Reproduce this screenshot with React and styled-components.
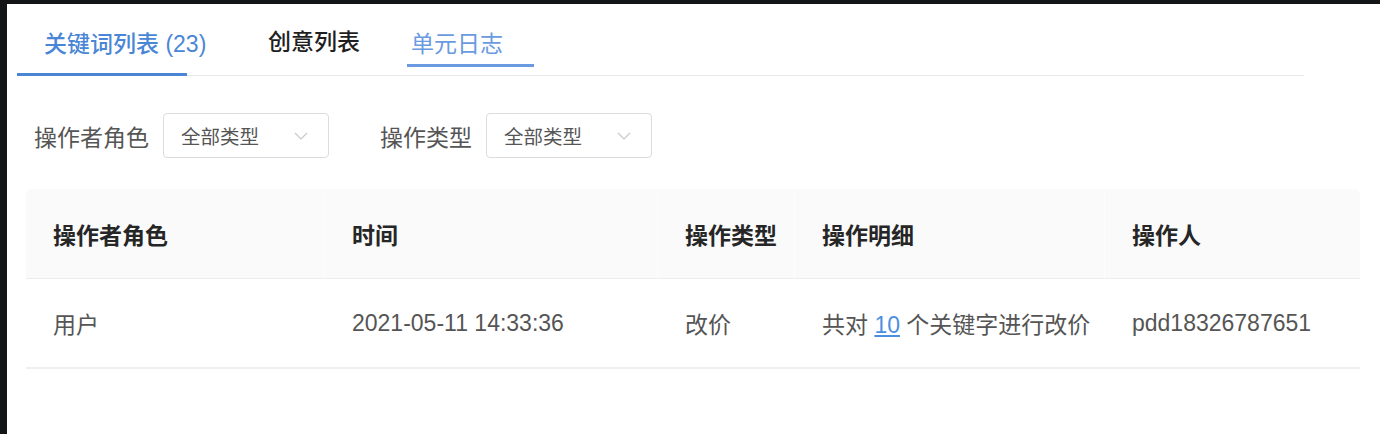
import React from 'react'
import styled, { createGlobalStyle } from 'styled-components'

const GlobalStyle = createGlobalStyle`
  html, body {
    margin: 0;
    padding: 0;
    background: #131416;
  }
  body {
    font-family: "Liberation Sans", "Noto Sans CJK SC", sans-serif;
  }
`

const columns = [
    { key: 'role', title: '操作者角色', width: 299 },
    { key: 'time', title: '时间', width: 333 },
    { key: 'type', title: '操作类型', width: 137 },
    { key: 'detail', title: '操作明细', width: 310 },
    { key: 'user', title: '操作人', width: 255 },
]

const rows = [
    { role: '用户', time: '2021-05-11 14:33:36', type: '改价', count: 10, user: 'pdd18326787651' },
]

function Chevron() {
    return (
        <svg width="14" height="8" viewBox="0 0 14 8" fill="none">
            <polyline points="1,1 7,7 13,1" stroke="#c9c9c9" strokeWidth="1.2" />
        </svg>
    )
}

function Filter({ label, value }) {
    return (
        <FilterItem>
            <Label>{label}</Label>
            <Select>
                <span>{value}</span>
                <Chevron />
            </Select>
        </FilterItem>
    )
}

function App() {
    return (
        <Frame>
            <GlobalStyle />
            <TabBar>
                <Tab $w={224} $active $strong>关键词列表 (23)</Tab>
                <Tab $w={139} $strong>创意列表</Tab>
                <Tab $underline>单元日志</Tab>
                <InkBar />
            </TabBar>

            <FilterRow>
                <Filter label="操作者角色" value="全部类型" />
                <Filter label="操作类型" value="全部类型" />
            </FilterRow>

            <Table>
                <colgroup>
                    {columns.map(c => <col key={c.key} style={{ width: c.width }} />)}
                </colgroup>
                <thead>
                    <tr>
                        {columns.map(c => <Th key={c.key}>{c.title}</Th>)}
                    </tr>
                </thead>
                <tbody>
                    {rows.map((r, i) => (
                        <tr key={i}>
                            <Td>{r.role}</Td>
                            <Td>{r.time}</Td>
                            <Td>{r.type}</Td>
                            <Td>共对 <Link>{r.count}</Link> 个关键字进行改价</Td>
                            <Td>{r.user}</Td>
                        </tr>
                    ))}
                </tbody>
            </Table>
        </Frame>
    )
}

export default App

const Frame = styled.div`
margin: 4px 0 0 7px;
min-height: calc(100vh - 4px);
background: #fff;
overflow: hidden;
`

const TabBar = styled.div`
position: relative;
display: flex;
align-items: flex-start;
margin: 0 76px 0 10px;
height: 71px;
padding-left: 27px;
border-bottom: 1px solid #e8e8e8;
`

const Tab = styled.div`
box-sizing: border-box;
flex: none;
width: ${p => (p.$w ? `${p.$w}px` : 'auto')};
padding-top: ${p => (p.$strong && !p.$active ? '22px' : '24px')};
font-size: 23px;
line-height: 32px;
font-weight: ${p => (p.$strong ? 500 : 400)};
color: ${p => (p.$active ? '#4a86d6' : p.$underline ? '#6a9be0' : '#1f1f1f')};
${p => p.$underline && `
  padding: 24px 31px 4px 4px;
  border-bottom: 3px solid #6a9be0;
`}
`

const InkBar = styled.div`
position: absolute;
left: 0;
bottom: -1px;
width: 170px;
height: 3px;
background: #4a86d4;
`

const FilterRow = styled.div`
display: flex;
align-items: center;
gap: 51px;
margin-top: 37px;
padding-left: 27px;
`

const FilterItem = styled.div`
display: flex;
align-items: center;
gap: 14px;
`

const Label = styled.span`
font-size: 23px;
color: #555;
`

const Select = styled.div`
box-sizing: border-box;
display: flex;
align-items: center;
justify-content: space-between;
width: 166px;
height: 45px;
padding: 0 20px 0 17px;
border: 1px solid #dcdcdc;
border-radius: 4px;
font-size: 19.5px;
color: #555;
`

const Table = styled.table`
margin: 31px 0 0 19px;
width: 1334px;
table-layout: fixed;
border-collapse: separate;
border-spacing: 0;
`

const Th = styled.th`
height: 89px;
padding: 0 0 0 27px;
background: #fafafa;
border-bottom: 1px solid #ececec;
border-right: 1px solid #fdfdfd;
text-align: left;
font-size: 23px;
font-weight: 700;
color: #262626;
&:first-child { border-top-left-radius: 6px; }
&:last-child { border-top-right-radius: 6px; border-right: none; }
`

const Td = styled.td`
height: 88px;
padding: 0 0 0 27px;
border-bottom: 2px solid #efefef;
font-size: 23px;
color: #555;
white-space: nowrap;
`

const Link = styled.a`
color: #4a90e2;
text-decoration: underline;
cursor: pointer;
`
